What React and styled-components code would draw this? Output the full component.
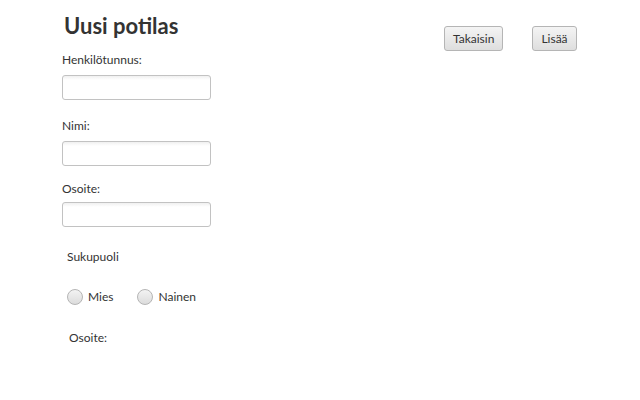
import React from "react";
import styled, { createGlobalStyle } from "styled-components";

const uiFont = `"Lato", "Open Sans", "Liberation Sans", sans-serif`;

const GlobalStyle = createGlobalStyle`
  html, body {
    margin: 0;
    padding: 0;
    background: #ffffff;
  }
  body {
    font-family: ${uiFont};
    color: #333333;
    width: 640px;
    height: 400px;
    overflow: hidden;
  }
`;

const Page = styled.div`
  width: 640px;
  height: 400px;
  display: grid;
  grid-template-columns: 380px 1fr;
`;

const FormColumn = styled.div`
  display: flex;
  flex-direction: column;
  align-items: flex-start;
  padding: 12px 0 0 62px;
`;

const Title = styled.h1`
  margin: 0 0 0 2px;
  font-size: 22px;
  line-height: 28px;
  font-weight: 700;
  color: #333333;
`;

const Label = styled.div`
  font-size: 12px;
  line-height: 16px;
  color: #333333;
  margin-top: ${p => p.$top || 0}px;
  margin-left: ${p => p.$indent || 0}px;
`;

const TextField = styled.div`
  box-sizing: border-box;
  width: 149px;
  height: 25px;
  margin-top: ${p => p.$top || 0}px;
  border: 1px solid #c2c2c2;
  border-radius: 3px;
  background: linear-gradient(#f0f0f0 0, #ffffff 4px, #ffffff 100%);
`;

const RadioRow = styled.div`
  display: flex;
  align-items: center;
  margin: 24px 0 0 5px;
  gap: 24px;
`;

const RadioOption = styled.label`
  display: flex;
  align-items: center;
  gap: 5px;
  font-size: 12px;
  line-height: 16px;
  color: #333333;
`;

const RadioCircle = styled.span`
  box-sizing: border-box;
  width: 16px;
  height: 16px;
  border-radius: 50%;
  border: 1px solid #b5b5b5;
  background: linear-gradient(#f3f3f3, #dcdcdc);
`;

const Actions = styled.div`
  display: flex;
  align-items: flex-start;
  padding: 26px 0 0 64px;
  gap: 29px;
`;

const Button = styled.button`
  box-sizing: border-box;
  height: 25px;
  padding: 0 8px;
  font-family: ${uiFont};
  font-size: 12px;
  color: #333333;
  border: 1px solid #b5b5b5;
  border-radius: 3px;
  background: linear-gradient(#f4f4f4, #dedede);
`;

export default function App() {
  return (
    <>
      <GlobalStyle />
      <Page>
        <FormColumn>
          <Title>Uusi potilas</Title>
          <Label $top={12}>Henkilötunnus:</Label>
          <TextField $top={7} />
          <Label $top={18}>Nimi:</Label>
          <TextField $top={7} />
          <Label $top={15}>Osoite:</Label>
          <TextField $top={5} />
          <Label $top={22} $indent={5}>Sukupuoli</Label>
          <RadioRow>
            <RadioOption><RadioCircle />Mies</RadioOption>
            <RadioOption><RadioCircle />Nainen</RadioOption>
          </RadioRow>
          <Label $top={25} $indent={7}>Osoite:</Label>
        </FormColumn>
        <Actions>
          <Button>Takaisin</Button>
          <Button>Lisää</Button>
        </Actions>
      </Page>
    </>
  );
}
